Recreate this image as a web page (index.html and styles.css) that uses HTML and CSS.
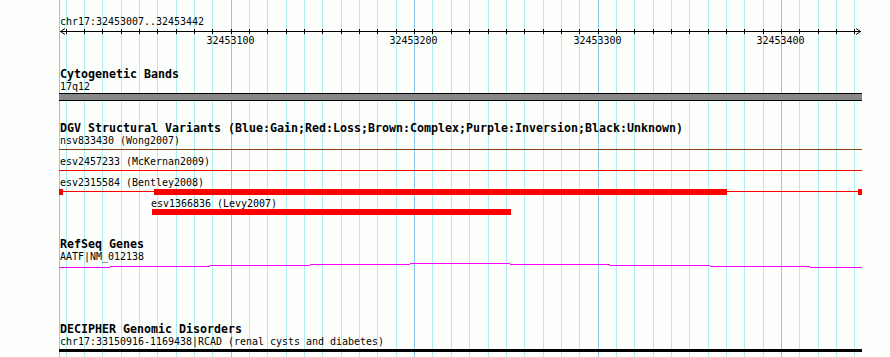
FILE: index.html
```html
<!DOCTYPE html>
<html lang="en">
<head>
<meta charset="utf-8">
<title>chr17:32453007..32453442</title>
<link rel="stylesheet" href="styles.css">
</head>
<body>
<div class="canvas">
  <svg class="grid" width="890" height="357" viewBox="0 0 890 357" aria-hidden="true">
    <path class="grid-minor" d="M66.5 0V357M84.5 0V357M102.5 0V357M121.5 0V357M139.5 0V357M157.5 0V357M176.5 0V357M194.5 0V357M212.5 0V357M249.5 0V357M267.5 0V357M286.5 0V357M304.5 0V357M322.5 0V357M341.5 0V357M359.5 0V357M377.5 0V357M396.5 0V357M432.5 0V357M451.5 0V357M469.5 0V357M488.5 0V357M506.5 0V357M524.5 0V357M543.5 0V357M561.5 0V357M579.5 0V357M616.5 0V357M634.5 0V357M653.5 0V357M671.5 0V357M689.5 0V357M708.5 0V357M726.5 0V357M744.5 0V357M763.5 0V357M799.5 0V357M818.5 0V357M836.5 0V357M854.5 0V357"/>
    <path class="grid-major" d="M59.5 0V357M231.5 0V357M414.5 0V357M598.5 0V357M781.5 0V357"/>
  </svg>

  <div class="content">
    <div class="ruler-label">chr17:32453007..32453442</div>
    <svg class="ruler" width="890" height="18" viewBox="0 0 890 18">
      <path class="axis" d="M60 3.5H861"/>
      <path class="axis" d="M65 0.5L60.5 3.5L65 6.5M856 0.5L860.5 3.5L856 6.5"/>
      <path class="ticks" d="M66.5 1V6M84.5 1V6M102.5 1V6M121.5 1V6M139.5 1V6M157.5 1V6M176.5 1V6M194.5 1V6M212.5 1V6M231.5 1V6M249.5 1V6M267.5 1V6M286.5 1V6M304.5 1V6M322.5 1V6M341.5 1V6M359.5 1V6M377.5 1V6M396.5 1V6M414.5 1V6M432.5 1V6M451.5 1V6M469.5 1V6M488.5 1V6M506.5 1V6M524.5 1V6M543.5 1V6M561.5 1V6M579.5 1V6M598.5 1V6M616.5 1V6M634.5 1V6M653.5 1V6M671.5 1V6M689.5 1V6M708.5 1V6M726.5 1V6M744.5 1V6M763.5 1V6M781.5 1V6M799.5 1V6M818.5 1V6M836.5 1V6M854.5 1V6"/>
      <text class="tick-label" x="230.5" y="16">32453100</text>
      <text class="tick-label" x="413.5" y="16">32453200</text>
      <text class="tick-label" x="597.5" y="16">32453300</text>
      <text class="tick-label" x="780.5" y="16">32453400</text>
    </svg>

    <section class="track track-cyto">
      <div class="track-title">Cytogenetic Bands</div>
      <div class="feat-label">17q12</div>
      <div class="lane lane-band"><div class="band"></div></div>
    </section>

    <section class="track track-dgv">
      <div class="track-title">DGV Structural Variants (Blue:Gain;Red:Loss;Brown:Complex;Purple:Inversion;Black:Unknown)</div>
      <div class="feature">
        <div class="feat-label">nsv833430 (Wong2007)</div>
        <div class="lane"><span class="thin brown" style="left:0;width:803px"></span></div>
      </div>
      <div class="feature">
        <div class="feat-label">esv2457233 (McKernan2009)</div>
        <div class="lane"><span class="thin red" style="left:0;width:803px"></span></div>
      </div>
      <div class="feature">
        <div class="feat-label">esv2315584 (Bentley2008)</div>
        <div class="lane">
          <span class="thin red" style="left:0;width:803px"></span>
          <span class="bar red" style="left:0;width:4px"></span>
          <span class="bar red" style="left:95px;width:573px"></span>
          <span class="bar red" style="left:799px;width:4px"></span>
        </div>
      </div>
      <div class="feature">
        <div class="feat-label" style="margin-left:151px">esv1366836 (Levy2007)</div>
        <div class="lane"><span class="bar red bar-up" style="left:93px;width:359px"></span></div>
      </div>
    </section>

    <section class="track track-refseq">
      <div class="track-title">RefSeq Genes</div>
      <div class="feat-label">AATF|NM_012138</div>
      <div class="lane lane-gene">
        <span class="seg" style="left:0;width:51px;top:4px"></span>
        <span class="seg" style="left:51px;width:100px;top:3px"></span>
        <span class="seg" style="left:151px;width:100px;top:2px"></span>
        <span class="seg" style="left:251px;width:100px;top:1px"></span>
        <span class="seg" style="left:351px;width:100px;top:0"></span>
        <span class="seg" style="left:451px;width:100px;top:1px"></span>
        <span class="seg" style="left:551px;width:100px;top:2px"></span>
        <span class="seg" style="left:651px;width:100px;top:3px"></span>
        <span class="seg" style="left:751px;width:52px;top:4px"></span>
      </div>
    </section>

    <section class="track track-decipher">
      <div class="track-title">DECIPHER Genomic Disorders</div>
      <div class="feat-label">chr17:33150916-1169438|RCAD (renal cysts and diabetes)</div>
      <div class="lane lane-decipher"><div class="decipher-bar"></div></div>
    </section>
  </div>
</div>
</body>
</html>
```

FILE: styles.css
```css
html, body {
  margin: 0;
  padding: 0;
  background: #fdfffd;
  overflow: hidden;
}

.canvas {
  position: relative;
  width: 890px;
  height: 357px;
  overflow: hidden;
  background: #fdfffd;
  font-family: "DejaVu Sans Mono", "Liberation Mono", monospace;
  color: #000;
}

.grid {
  position: absolute;
  left: 0;
  top: 0;
  display: block;
}

.grid-minor {
  stroke: #aeeeee;
  stroke-width: 1;
  fill: none;
  shape-rendering: crispEdges;
}

.grid-major {
  stroke: #8ccbee;
  stroke-width: 1;
  fill: none;
  shape-rendering: crispEdges;
}

.content {
  position: relative;
  padding-top: 15px;
}

.ruler-label,
.feat-label {
  font-size: 9.97px;
  line-height: 13px;
  height: 13px;
  margin-left: 60px;
  white-space: nowrap;
}

.ruler {
  display: block;
}

.axis {
  stroke: #000;
  stroke-width: 1;
  fill: none;
}

.ticks {
  stroke: #000;
  stroke-width: 1;
  fill: none;
  shape-rendering: crispEdges;
}

.tick-label {
  font-family: "DejaVu Sans Mono", "Liberation Mono", monospace;
  font-size: 9.97px;
  text-anchor: middle;
  fill: #000;
}

.track-title {
  font-size: 11.63px;
  font-weight: bold;
  line-height: 12px;
  height: 12px;
  margin-left: 60px;
  white-space: nowrap;
}

.track-cyto { margin-top: 22px; }
.track-dgv { margin-top: 21px; }
.track-refseq { margin-top: 20px; }
.track-decipher { margin-top: 54px; }

.lane {
  position: relative;
  margin-left: 59px;
  width: 803px;
  height: 8px;
}

.lane-band { height: 8px; }

.band {
  height: 6px;
  background: #888888;
  border-top: 1px solid #000;
  border-bottom: 1px solid #000;
}

.thin {
  position: absolute;
  top: 2px;
  height: 1px;
}

.bar {
  position: absolute;
  top: 0;
  height: 6px;
}

.bar-up { top: -1px; }

.red { background: #ff0000; }
.brown { background: #8b4513; }

.lane-gene { height: 6px; }

.seg {
  position: absolute;
  height: 1px;
  background: #ff00ff;
}

.lane-decipher {
  height: 9px;
  padding-top: 1px;
  box-sizing: border-box;
}

.decipher-bar {
  height: 3px;
  background: #000;
}
```
